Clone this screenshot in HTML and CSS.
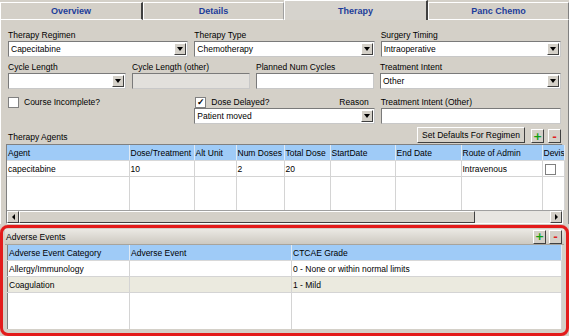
FILE: index.html
```html
<!DOCTYPE html>
<html lang="en">
<head>
    <meta charset="UTF-8">
    <meta name="viewport" content="width=device-width, initial-scale=1.0">
    <title>Therapy</title>
    <link rel="stylesheet" href="styles.css">
</head>
<body>
    <div class="window">
        <div class="tabs">
            <div class="tab tab-overview">Overview</div>
            <div class="tab tab-details">Details</div>
            <div class="tab tab-therapy active">Therapy</div>
            <div class="tab tab-panc">Panc Chemo</div>
        </div>

        <div class="panel">
            <div class="form-row">
                <div class="field w182">
                    <label>Therapy Regimen</label>
                    <div class="combo"><span>Capecitabine</span><i class="arrow"></i></div>
                </div>
                <div class="field w182">
                    <label>Therapy Type</label>
                    <div class="combo"><span>Chemotherapy</span><i class="arrow"></i></div>
                </div>
                <div class="field w182">
                    <label>Surgery Timing</label>
                    <div class="combo"><span>Intraoperative</span><i class="arrow"></i></div>
                </div>
            </div>

            <div class="form-row">
                <div class="field w119">
                    <label>Cycle Length</label>
                    <div class="combo"><span></span><i class="arrow"></i></div>
                </div>
                <div class="field w119">
                    <label>Cycle Length (other)</label>
                    <div class="textbox disabled"></div>
                </div>
                <div class="field w119">
                    <label>Planned Num Cycles</label>
                    <div class="textbox"></div>
                </div>
                <div class="field w182">
                    <label>Treatment Intent</label>
                    <div class="combo"><span>Other</span><i class="arrow"></i></div>
                </div>
            </div>

            <div class="form-row row3">
                <div class="field w182">
                    <div class="check-line"><i class="checkbox"></i>Course Incomplete?</div>
                </div>
                <div class="field w182">
                    <div class="check-line">
                        <i class="checkbox checked">&#10003;</i>Dose Delayed?
                        <span class="reason">Reason</span>
                    </div>
                    <div class="combo"><span>Patient moved</span><i class="arrow"></i></div>
                </div>
                <div class="field w182">
                    <label>Treatment Intent (Other)</label>
                    <div class="textbox"></div>
                </div>
            </div>

            <div class="agents-head">
                <span class="section-label">Therapy Agents</span>
                <button class="btn">Set Defaults For Regimen</button>
                <button class="mini plus">+</button>
                <button class="mini minus">-</button>
            </div>

            <div class="grid-box">
                <table class="grid agents">
                    <colgroup>
                        <col style="width:122px"><col style="width:65px"><col style="width:42px">
                        <col style="width:48px"><col style="width:46px"><col style="width:65px">
                        <col style="width:66px"><col style="width:81px"><col style="width:22px">
                    </colgroup>
                    <thead>
                        <tr>
                            <th>Agent</th><th>Dose/Treatment</th><th>Alt Unit</th><th>Num Doses</th>
                            <th>Total Dose</th><th>StartDate</th><th>End Date</th><th>Route of Admin</th><th>Devis</th>
                        </tr>
                    </thead>
                    <tbody>
                        <tr>
                            <td>capecitabine</td><td>10</td><td></td><td>2</td><td>20</td>
                            <td></td><td></td><td>Intravenous</td><td><i class="checkbox"></i></td>
                        </tr>
                        <tr class="filler">
                            <td></td><td></td><td></td><td></td><td></td><td></td><td></td><td></td><td></td>
                        </tr>
                    </tbody>
                </table>
                <div class="hscroll">
                    <div class="sbtn left"></div>
                    <div class="thumb"><span class="grip"></span></div>
                    <div class="track"></div>
                    <div class="sbtn right"></div>
                </div>
            </div>
        </div>

        <div class="adverse">
            <div class="adverse-bar">
                <span>Adverse Events</span>
                <button class="mini plus">+</button>
                <button class="mini minus">-</button>
            </div>
            <table class="grid events">
                <colgroup>
                    <col style="width:122px"><col style="width:162px"><col>
                </colgroup>
                <thead>
                    <tr><th>Adverse Event Category</th><th>Adverse Event</th><th>CTCAE Grade</th></tr>
                </thead>
                <tbody>
                    <tr><td>Allergy/Immunology</td><td></td><td>0 - None or within normal limits</td></tr>
                    <tr class="alt"><td>Coagulation</td><td></td><td>1 - Mild</td></tr>
                    <tr class="filler tall"><td></td><td></td><td></td></tr>
                </tbody>
            </table>
        </div>
    </div>
</body>
</html>
```

FILE: styles.css
```css
body {
    margin: 0;
    background-color: #d4d0c8;
    font-family: "Liberation Sans", Arial, sans-serif;
    font-size: 8.5px;
    color: #000;
}
.window {
    width: 569px;
    height: 336px;
    overflow: hidden;
    background-color: #d4d0c8;
}

/* tabs */
.tabs {
    display: flex;
    height: 20px;
    align-items: flex-end;
}
.tab {
    box-sizing: border-box;
    height: 18px;
    line-height: 16px;
    text-align: center;
    font-size: 9px;
    font-weight: bold;
    color: #1d3d9a;
    background-color: #d4d0c8;
    border-top: 1px solid #fff;
    border-left: 1px solid #fff;
    border-right: 2px solid #404040;
    border-bottom: 1px solid #fff;
}
.tab-overview { width: 143px; }
.tab-details { width: 141px; border-right: 1px solid #a0a0a0; }
.tab-therapy { width: 144px; }
.tab-panc { width: 141px; border-right: 1px solid #808080; }
.tab.active {
    height: 20px;
    line-height: 20px;
    border-bottom: none;
    background-color: #d6d3cd;
}

/* form */
.panel {
    padding: 9px 7px 0 7px;
    border-left: 1px solid #fff;
    border-right: 1px solid #808080;
    box-sizing: border-box;
    width: 569px;
}
.form-row {
    display: flex;
    gap: 6px;
    margin-bottom: 4px;
}
.form-row.row3 {
    margin-top: 7px;
    margin-bottom: 2px;
}
.field {
    display: flex;
    flex-direction: column;
}
.w182 { width: 181px; }
.w119 { width: 118px; }
.field label {
    height: 12px;
    line-height: 12px;
    white-space: nowrap;
}
.combo, .textbox {
    box-sizing: border-box;
    height: 16px;
    background-color: #fff;
    border: 1px solid #7a7a7a;
    border-right-color: #c8c8c8;
    border-bottom-color: #c8c8c8;
    display: flex;
    align-items: center;
}
.combo span {
    flex: 1;
    padding-left: 2px;
    white-space: nowrap;
}
.arrow {
    width: 12px;
    height: 12px;
    margin-right: 1px;
    box-sizing: border-box;
    background-color: #d4d0c8;
    border: 1px solid;
    border-color: #fff #404040 #404040 #fff;
    display: flex;
    align-items: center;
    justify-content: center;
}
.arrow::after {
    content: "";
    border-left: 3px solid transparent;
    border-right: 3px solid transparent;
    border-top: 4px solid #000;
}
.textbox.disabled {
    background-color: #e2e0dc;
}
.check-line {
    height: 12px;
    display: flex;
    align-items: center;
    white-space: nowrap;
}
.checkbox {
    box-sizing: border-box;
    width: 11px;
    height: 11px;
    background-color: #fff;
    border: 1px solid #808080;
    margin-right: 5px;
    font-style: normal;
    font-size: 9px;
    line-height: 9px;
    text-align: center;
    font-weight: bold;
}
.checkbox.checked {
    margin-left: 1px;
}
.reason {
    margin-left: auto;
    margin-right: 6px;
}

/* therapy agents */
.agents-head {
    display: flex;
    align-items: flex-end;
    height: 17px;
    gap: 4px;
}
.section-label {
    flex: 1;
    line-height: 12px;
}
.btn {
    box-sizing: border-box;
    height: 16px;
    width: 108px;
    margin-right: 2px;
    padding: 0;
    font-family: inherit;
    font-size: 8.5px;
    background-color: #d4d0c8;
    border: 1px solid;
    border-color: #fff #404040 #404040 #fff;
}
.mini {
    box-sizing: border-box;
    width: 13px;
    height: 14px;
    padding: 0;
    font-family: "DejaVu Sans", sans-serif;
    font-size: 11px;
    line-height: 11px;
    font-weight: bold;
    background-color: #d4d0c8;
    border: 1px solid;
    border-color: #fff #404040 #404040 #fff;
}
.mini.plus { color: #10a010; }
.mini.minus { color: #e02020; }

.grid-box {
    margin: 1px -2px 0 -2px;
    border: 1px solid #808080;
    border-right-color: #fff;
    border-bottom-color: #fff;
    background-color: #fff;
}
.grid {
    border-collapse: collapse;
    table-layout: fixed;
    width: 100%;
}
.grid th {
    height: 15px;
    padding: 0 0 0 1px;
    text-align: left;
    font-weight: normal;
    background-color: #9fcbf7;
    border-right: 1px solid #dfe9f4;
    border-bottom: 1px solid #d8d8d8;
    white-space: nowrap;
    overflow: hidden;
}
.grid td {
    height: 15px;
    padding: 0 0 0 1px;
    background-color: #fff;
    border-right: 1px solid #d4d4d4;
    border-bottom: 1px solid #d4d4d4;
    white-space: nowrap;
    overflow: hidden;
}
.grid td .checkbox {
    display: block;
    margin: 1px 0 0 1px;
}
.grid .filler td {
    height: 33px;
    border-bottom: none;
}
.grid tr.alt td {
    background-color: #ebeadf;
}

.hscroll {
    display: flex;
    height: 12px;
    background-color: #e8e6e2;
    border-top: 1px solid #a0a0a0;
}
.sbtn, .thumb {
    box-sizing: border-box;
    background-color: #d4d0c8;
    border: 1px solid;
    border-color: #fff #404040 #404040 #fff;
}
.sbtn {
    width: 12px;
    display: flex;
    align-items: center;
    justify-content: center;
}
.sbtn.left::after {
    content: "";
    border-top: 3px solid transparent;
    border-bottom: 3px solid transparent;
    border-right: 3px solid #000;
}
.sbtn.right::after {
    content: "";
    border-top: 3px solid transparent;
    border-bottom: 3px solid transparent;
    border-left: 3px solid #000;
}
.thumb {
    width: 456px;
    display: flex;
    align-items: center;
    justify-content: center;
}
.grip {
    width: 4px;
    height: 4px;
    background-image: radial-gradient(#808080 40%, transparent 45%);
    background-size: 2px 2px;
}
.track {
    flex: 1;
}

/* adverse events, highlighted */
.adverse {
    margin-top: 1px;
    height: 111px;
    box-sizing: border-box;
    border: 3px solid #e31b1b;
    border-radius: 8px;
    padding: 1px 4px 0 4px;
    box-shadow: 0 0 1px #f06060;
    overflow: hidden;
}
.adverse-bar {
    display: flex;
    align-items: center;
    gap: 3px;
    height: 15px;
    margin: 0 -2px;
    padding-left: 1px;
    padding-right: 2px;
    background: linear-gradient(#ebe9e4, #cdc9c1);
    border-bottom: 1px solid #a8a49c;
}
.adverse-bar span {
    flex: 1;
}
.events {
    border-left: 1px solid #808080;
}
.events .filler.tall td {
    height: 36px;
}
```
